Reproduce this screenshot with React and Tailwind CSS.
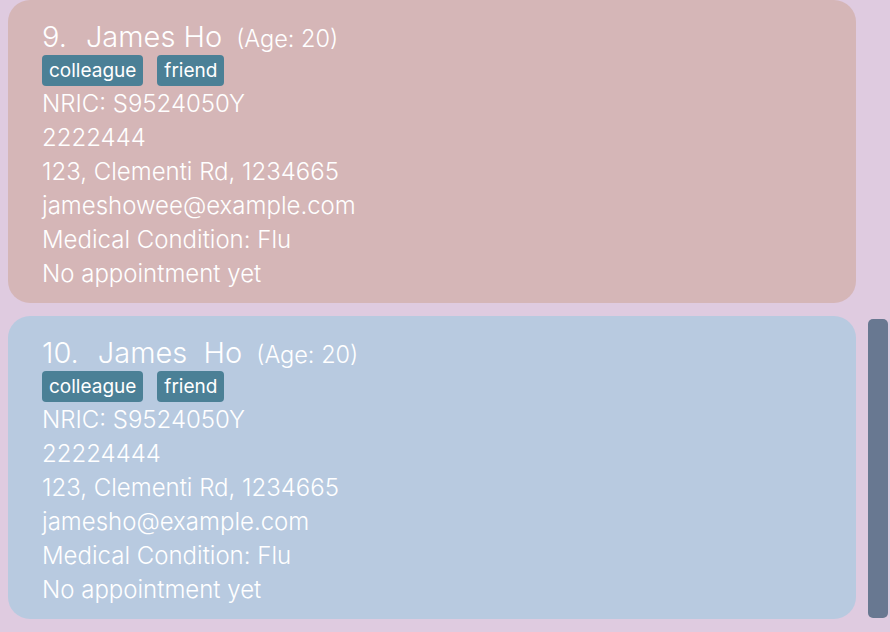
import React from 'react';

const people = [
  {
    index: '9.',
    name: 'James Ho',
    age: 20,
    tags: ['colleague', 'friend'],
    nric: 'S9524050Y',
    phone: '2222444',
    address: '123, Clementi Rd, 1234665',
    email: 'jameshowee@example.com',
    condition: 'Flu',
    bg: 'bg-[#d5b6b7]',
  },
  {
    index: '10.',
    name: 'James  Ho',
    age: 20,
    tags: ['colleague', 'friend'],
    nric: 'S9524050Y',
    phone: '22224444',
    address: '123, Clementi Rd, 1234665',
    email: 'jamesho@example.com',
    condition: 'Flu',
    bg: 'bg-[#b8cae0]',
  },
];

function PersonCard({ p }) {
  return (
    <div className={`w-[848px] h-[303px] rounded-[22px] pl-[34px] pt-[15px] text-white ${p.bg}`}>
      <div className="flex items-baseline h-[40px]">
        <span className="text-[29px] font-light">{p.index}</span>
        <span className="text-[29px] font-light whitespace-pre ml-[19px]">{p.name}</span>
        <span className="text-[23.5px] font-light ml-[14px]">(Age: {p.age})</span>
      </div>
      <div className="flex gap-[14px] mb-[1px]">
        {p.tags.map(t => (
          <span key={t} className="bg-[#4b8096] rounded-[4px] h-[31px] px-[7px] text-[19px] leading-[31px]">
            {t}
          </span>
        ))}
      </div>
      <div className="text-[24px] font-light leading-[34px]">
        <div>NRIC: {p.nric}</div>
        <div>{p.phone}</div>
        <div>{p.address}</div>
        <div>{p.email}</div>
        <div>Medical Condition: {p.condition}</div>
        <div>No appointment yet</div>
      </div>
    </div>
  );
}

export default function App() {
  return (
    <div className="w-[890px] h-[632px] bg-[#dfcbe0] overflow-hidden flex" style={{ fontFamily: 'Inter, "Noto Sans", sans-serif' }}>
      <div className="flex flex-col gap-[13px] pl-2 pt-0">
        {people.map(p => <PersonCard key={p.index} p={p} />)}
      </div>
      <div className="ml-3 mt-[319px] w-5 h-[299px] rounded-[5px] bg-[#687891]" />
    </div>
  );
}
